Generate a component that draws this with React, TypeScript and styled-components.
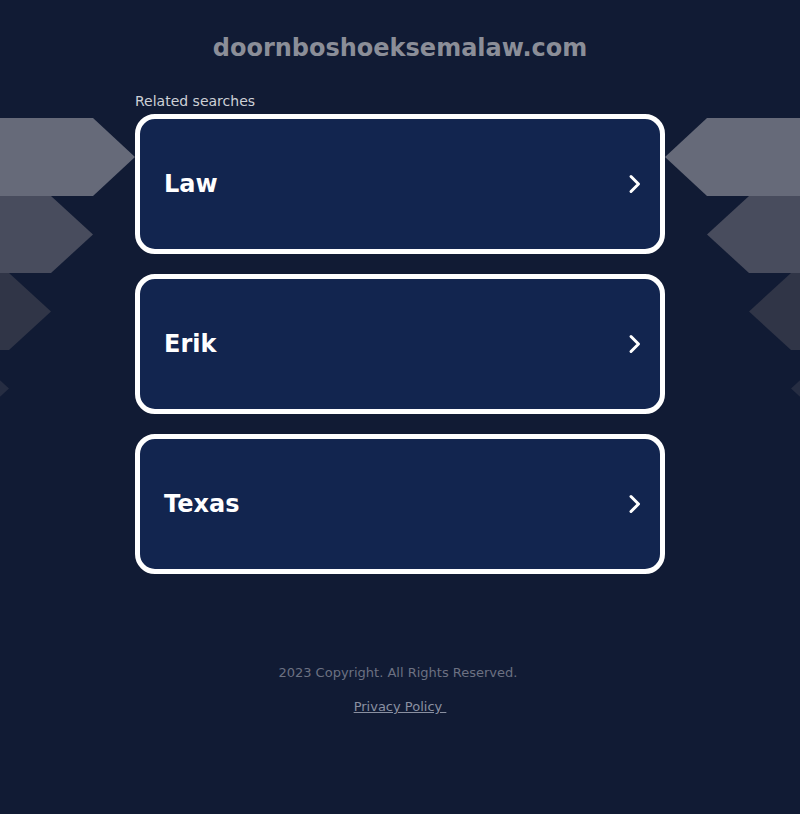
import React from 'react';
import styled, { createGlobalStyle } from 'styled-components';

const GlobalStyle = createGlobalStyle`
  html, body {
    margin: 0;
    padding: 0;
    background: #111b34;
  }
`;

const Page = styled.div`
  position: relative;
  min-height: 100vh;
  overflow: hidden;
  background: #111b34;
  font-family: "DejaVu Sans", "Liberation Sans", sans-serif;
`;

// Decorative arrow stacks at both sides
const Decor = styled.svg<{ side: 'left' | 'right' }>`
  position: absolute;
  top: 118px;
  ${props => (props.side === 'left' ? 'left: 0;' : 'right: 0; transform: scaleX(-1);')}
  width: 135px;
  height: 310px;
  pointer-events: none;
  z-index: 0;
`;

const Title = styled.h1`
  position: relative;
  z-index: 1;
  margin: 0;
  padding-top: 34px;
  font-size: 24px;
  line-height: 28px;
  font-weight: 700;
  color: #8b8e98;
  text-align: center;
`;

const Main = styled.main`
  position: relative;
  z-index: 1;
  width: 530px;
  margin: 0 auto;
`;

const Label = styled.div`
  margin-top: 31px;
  margin-bottom: 5px;
  font-size: 14px;
  line-height: 16px;
  color: #cdd0d6;
`;

const CardList = styled.div`
  display: flex;
  flex-direction: column;
  gap: 20px;
`;

const Card = styled.a`
  box-sizing: border-box;
  display: flex;
  align-items: center;
  justify-content: space-between;
  height: 140px;
  padding: 0 18px 0 24px;
  border: 5px solid #ffffff;
  border-radius: 20px;
  background: #12254f;
  color: #ffffff;
  text-decoration: none;
  cursor: pointer;
`;

const CardText = styled.span`
  font-size: 24px;
  line-height: 28px;
  font-weight: 700;
`;

const Footer = styled.footer`
  position: relative;
  z-index: 1;
  display: flex;
  flex-direction: column;
  align-items: center;
  margin-top: 91px;
  font-size: 13px;
  line-height: 15px;
`;

const Copyright = styled.div`
  color: #6c7182;
  white-space: pre;
`;

const PrivacyLink = styled.a`
  margin-top: 19px;
  color: #8a90a1;
  text-decoration: underline;
  white-space: pre;
`;

const Chevron = () => (
  <svg width="14" height="20" viewBox="0 0 14 20" fill="none">
    <path d="M3 2.5 L10.5 10 L3 17.5" stroke="#ffffff" strokeWidth="3" strokeLinecap="round" strokeLinejoin="round" />
  </svg>
);

const ArrowStack = ({ side }: { side: 'left' | 'right' }) => (
  <Decor side={side} viewBox="0 0 135 310">
    <polygon points="0,0 93,0 135,39 93,78 0,78" fill="#666a79" />
    <polygon points="0,78 51,78 93,116.5 51,155 0,155" fill="#484c5d" />
    <polygon points="0,155 9,155 51,193.5 9,232 0,232" fill="#303547" />
    <polygon points="-33,232 9,270.5 -33,309" fill="#262d42" />
  </Decor>
);

const searches = ['Law', 'Erik', 'Texas'];

export default function App() {
  return (
    <>
      <GlobalStyle />
      <Page>
        <ArrowStack side="left" />
        <ArrowStack side="right" />
        <Title>doornboshoeksemalaw.com</Title>
        <Main>
          <Label>Related searches</Label>
          <CardList>
            {searches.map(s => (
              <Card key={s}>
                <CardText>{s}</CardText>
                <Chevron />
              </Card>
            ))}
          </CardList>
        </Main>
        <Footer>
          <Copyright>2023 Copyright. All Rights Reserved. </Copyright>
          <PrivacyLink>Privacy Policy </PrivacyLink>
        </Footer>
      </Page>
    </>
  );
}
